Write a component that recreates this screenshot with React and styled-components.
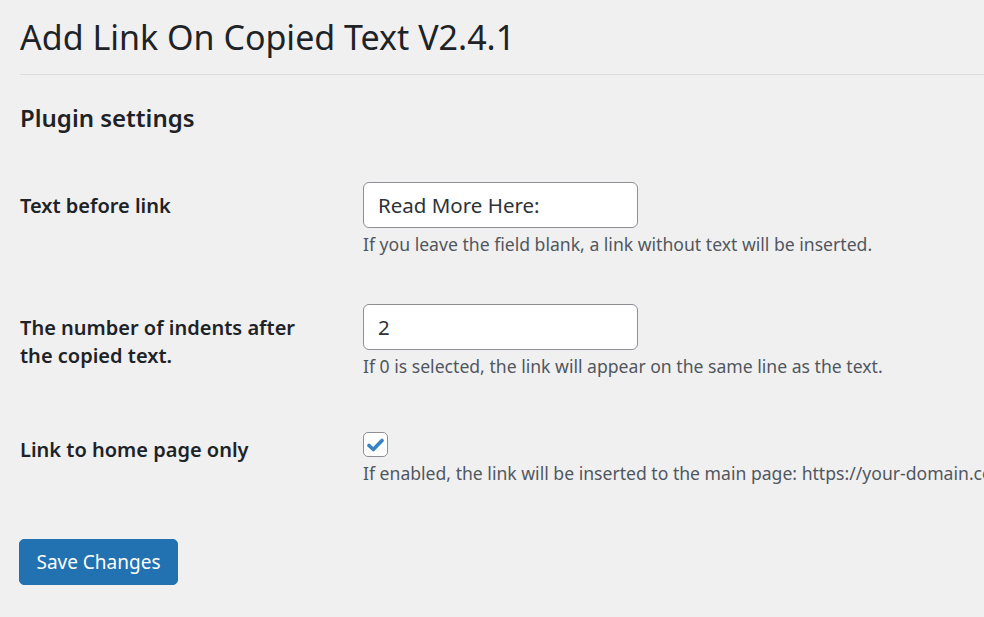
import React from 'react'
import styled, { createGlobalStyle } from 'styled-components'

const GlobalStyle = createGlobalStyle`
  html, body {
    margin: 0;
    padding: 0;
    background: #f0f0f1;
  }
  body {
    font-family: 'Noto Sans', 'Open Sans', sans-serif;
    color: #1d2327;
    overflow: hidden;
  }
`

const Wrap = styled.div`
  padding: 0 0 0 20px;
  width: 964px;
  height: 617px;
  overflow: hidden;
`

const Title = styled.h1`
  font-size: 34px;
  font-weight: 400;
  line-height: 44px;
  margin: 0;
  padding: 15px 0 15px;
  border-bottom: 1px solid #dcdcde;
  white-space: nowrap;
`

const Section = styled.h2`
  font-size: 24px;
  font-weight: 600;
  line-height: 32px;
  margin: 0;
  padding-top: 27px;
`

const Form = styled.form`
  margin-top: 25px;
`

const Row = styled.div`
  display: grid;
  grid-template-columns: 343px 1fr;
  padding: 23px 0;
`

const Label = styled.label`
  font-size: 20px;
  font-weight: 600;
  line-height: 28px;
  padding-top: 10px;
  padding-right: 40px;
`

const Field = styled.div`
  display: flex;
  flex-direction: column;
  align-items: flex-start;
  min-width: 0;
`

const Input = styled.input`
  box-sizing: border-box;
  width: 275px;
  height: 46px;
  padding: 0 14px;
  border: 1px solid #8c8f94;
  border-radius: 6px;
  background: #fff;
  font-family: inherit;
  font-size: 20.5px;
  color: #2c3338;
  outline: none;
`

const Description = styled.p`
  margin: 2px 0 0;
  font-size: 17.6px;
  line-height: 28px;
  color: #50575e;
  white-space: nowrap;
`

const Check = styled.span`
  box-sizing: border-box;
  width: 25px;
  height: 25px;
  margin-top: 6px;
  border: 1px solid #8c8f94;
  border-radius: 5px;
  background: #fff;
  display: flex;
  align-items: center;
  justify-content: center;
`

const Button = styled.button`
  margin-top: 29px;
  margin-left: -1px;
  width: 159px;
  height: 46px;
  background: #2271b1;
  border: 1px solid #2271b1;
  border-radius: 5px;
  color: #fff;
  font-family: inherit;
  font-size: 19px;
  cursor: pointer;
`

const settings = [
  {
    label: 'Text before link',
    value: 'Read More Here:',
    note: 'If you leave the field blank, a link without text will be inserted.',
  },
  {
    label: 'The number of indents after the copied text.',
    value: '2',
    note: 'If 0 is selected, the link will appear on the same line as the text.',
  },
]

const App = () => (
  <Wrap>
    <GlobalStyle />
    <Title>Add Link On Copied Text V2.4.1</Title>
    <Section>Plugin settings</Section>
    <Form onSubmit={e => e.preventDefault()}>
      {settings.map(s => (
        <Row key={s.label}>
          <Label>{s.label}</Label>
          <Field>
            <Input defaultValue={s.value} />
            <Description>{s.note}</Description>
          </Field>
        </Row>
      ))}
      <Row>
        <Label>Link to home page only</Label>
        <Field>
          <Check>
            <svg width="17" height="14" viewBox="0 0 17 14">
              <path
                d="M2 7.5 L6.3 11.5 L15 2.5"
                fill="none"
                stroke="#3582c4"
                strokeWidth="3.6"
                strokeLinecap="round"
                strokeLinejoin="round"
              />
            </svg>
          </Check>
          <Description>
            If enabled, the link will be inserted to the main page: https://your-domain.com
          </Description>
        </Field>
      </Row>
      <Button type="submit">Save Changes</Button>
    </Form>
  </Wrap>
)

export default App
